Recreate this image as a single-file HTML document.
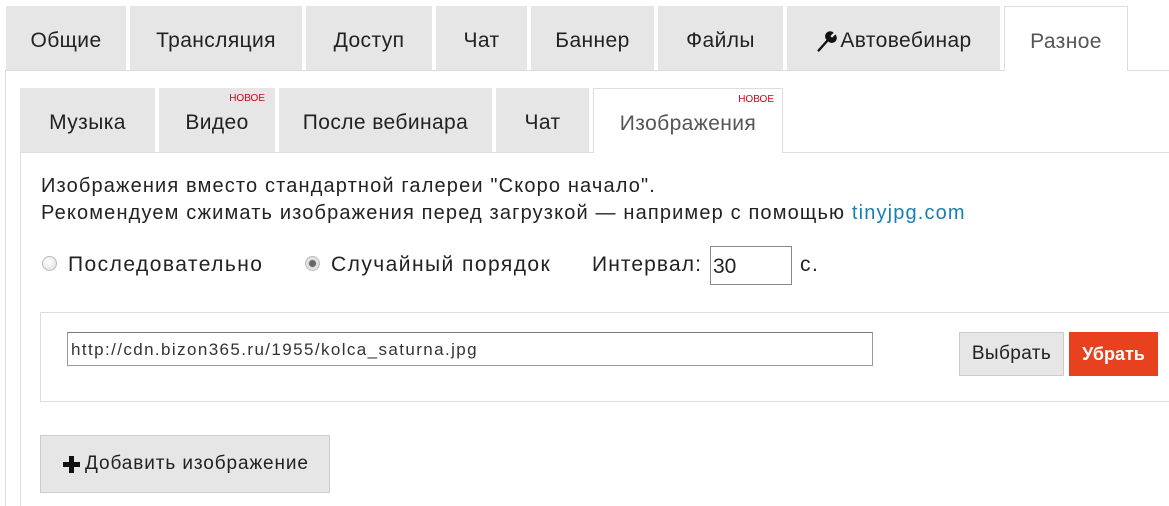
<!DOCTYPE html>
<html><head><meta charset="utf-8"><style>
*{box-sizing:border-box;margin:0;padding:0}
body{width:1169px;height:506px;background:#fff;font-family:"Liberation Sans",Arial,sans-serif;color:#222;position:relative;overflow:hidden}
.a{position:absolute}
.t{position:absolute;background:#e6e6e6;display:flex;align-items:center;justify-content:center;font-size:21px;color:#222;letter-spacing:0.4px;padding-top:5px}
.act{background:#fff;border:1px solid #ddd;border-bottom:none;color:#555}
.new{position:absolute;font-size:10px;color:#d0021b;top:5px;right:10px;letter-spacing:0}
.txt{font-size:20px;letter-spacing:1.15px;white-space:nowrap}
.lbl{position:absolute;font-size:21px;letter-spacing:1.45px;white-space:nowrap}
.radio{position:absolute;width:15px;height:15px;border-radius:50%;border:1px solid #bbb;background:radial-gradient(circle at 40% 35%,#fff,#ddd)}
</style></head><body>
<div class="t" style="left:6px;top:6px;width:120px;height:64px">Общие</div>
<div class="t" style="left:130px;top:6px;width:172px;height:64px">Трансляция</div>
<div class="t" style="left:306px;top:6px;width:126px;height:64px">Доступ</div>
<div class="t" style="left:436px;top:6px;width:91px;height:64px">Чат</div>
<div class="t" style="left:531px;top:6px;width:123px;height:64px">Баннер</div>
<div class="t" style="left:658px;top:6px;width:125px;height:64px">Файлы</div>
<div class="t" style="left:787px;top:6px;width:213px;height:64px"><svg width="22" height="22" viewBox="0 0 20 20" style="margin-right:3px"><path d="M2 18.5 L10.5 9 A4.5 4.5 0 0 1 17 2.5 L14 5.5 L15.5 7 L18.5 4 A4.5 4.5 0 0 1 12 10.5 L3.5 20 Z" fill="#111"/></svg>Автовебинар</div>
<div class="t act" style="left:1004px;top:6px;width:124px;height:65px">Разное</div>
<div class="a" style="left:5px;top:70px;width:999px;height:1px;background:#ddd"></div>
<div class="a" style="left:1128px;top:70px;width:41px;height:1px;background:#ddd"></div>
<div class="a" style="left:5px;top:70px;width:1px;height:436px;background:#ddd"></div>
<div class="t" style="left:20px;top:88px;width:135px;height:64px">Музыка</div>
<div class="t" style="left:159px;top:88px;width:116px;height:64px">Видео<span class="new" style="right:10px">НОВОЕ</span></div>
<div class="t" style="left:279px;top:88px;width:213px;height:64px">После вебинара</div>
<div class="t" style="left:496px;top:88px;width:93px;height:64px">Чат</div>
<div class="t act" style="left:593px;top:88px;width:190px;height:65px">Изображения<span class="new" style="right:8px">НОВОЕ</span></div>
<div class="a" style="left:20px;top:152px;width:573px;height:1px;background:#ddd"></div>
<div class="a" style="left:783px;top:152px;width:386px;height:1px;background:#ddd"></div>
<div class="a" style="left:20px;top:152px;width:1px;height:354px;background:#ddd"></div>
<div class="a txt" style="left:41px;top:175px">Изображения вместо стандартной галереи "Скоро начало".</div>
<div class="a txt" style="left:41px;top:202px">Рекомендуем сжимать изображения перед загрузкой — например с помощью <span style="color:#1a7fb0">tinyjpg.com</span></div>
<div class="radio" style="left:42px;top:256px"></div>
<div class="lbl" style="left:68px;top:253px">Последовательно</div>
<div class="radio" style="left:305px;top:256px;background:radial-gradient(circle,#666 0 3px,#ddd 4px,#eee)"></div>
<div class="lbl" style="left:331px;top:253px">Случайный порядок</div>
<div class="lbl" style="left:592px;top:253px;letter-spacing:1.1px">Интервал:</div>
<div class="a" style="left:710px;top:246px;width:82px;height:39px;border:1px solid #888;font-size:21px;padding:8px 0 0 2px">30</div>
<div class="lbl" style="left:800px;top:253px">с.</div>
<div class="a" style="left:40px;top:312px;width:1140px;height:90px;border:1px solid #ddd;border-right:none"></div>
<div class="a" style="left:67px;top:332px;width:806px;height:34px;border:1px solid #999;border-top-color:#777;font-size:17px;letter-spacing:1.4px;padding:7px 0 0 3px;color:#333;white-space:nowrap;overflow:hidden">http://cdn.bizon365.ru/1955/kolca_saturna.jpg</div>
<div class="a" style="left:959px;top:332px;width:105px;height:44px;background:#e6e6e6;border:1px solid #ccc;font-size:19px;letter-spacing:0.4px;display:flex;align-items:center;justify-content:center">Выбрать</div>
<div class="a" style="left:1069px;top:332px;width:89px;height:44px;background:#e8411f;color:#fff;font-weight:bold;font-size:18px;display:flex;align-items:center;justify-content:center">Убрать</div>
<div class="a" style="left:40px;top:435px;width:290px;height:58px;background:#e6e6e6;border:1px solid #ccc;font-size:19px;letter-spacing:0.9px;display:flex;align-items:center;padding-left:22px;white-space:nowrap"><svg width="17" height="17" viewBox="0 0 17 17" style="margin-right:5px"><path d="M6 0h5v6h6v5h-6v6H6v-6H0V6h6z" fill="#111"/></svg>Добавить изображение</div>
</body></html>
